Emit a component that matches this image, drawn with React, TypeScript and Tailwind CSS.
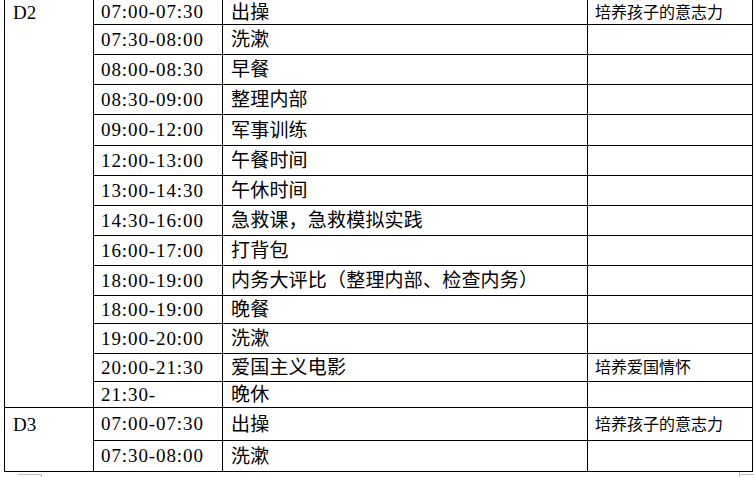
import React from "react"

type Row = { time: string; item: string; goal?: string; h: string }

const days: { day: string; rows: Row[] }[] = [
  {
    day: "D2",
    rows: [
      { time: "07:00-07:30", item: "出操", goal: "培养孩子的意志力", h: "h-[24px]" },
      { time: "07:30-08:00", item: "洗漱", h: "h-[30px]" },
      { time: "08:00-08:30", item: "早餐", h: "h-[30px]" },
      { time: "08:30-09:00", item: "整理内部", h: "h-[30px]" },
      { time: "09:00-12:00", item: "军事训练", h: "h-[31px]" },
      { time: "12:00-13:00", item: "午餐时间", h: "h-[30px]" },
      { time: "13:00-14:30", item: "午休时间", h: "h-[30px]" },
      { time: "14:30-16:00", item: "急救课，急救模拟实践", h: "h-[30px]" },
      { time: "16:00-17:00", item: "打背包", h: "h-[30px]" },
      { time: "18:00-19:00", item: "内务大评比（整理内部、检查内务）", h: "h-[30px]" },
      { time: "18:00-19:00", item: "晚餐", h: "h-[28px]" },
      { time: "19:00-20:00", item: "洗漱", h: "h-[30px]" },
      { time: "20:00-21:30", item: "爱国主义电影", goal: "培养爱国情怀", h: "h-[28px]" },
      { time: "21:30-", item: "晚休", h: "h-[26px]" },
    ],
  },
  {
    day: "D3",
    rows: [
      { time: "07:00-07:30", item: "出操", goal: "培养孩子的意志力", h: "h-[33px]" },
      { time: "07:30-08:00", item: "洗漱", h: "h-[31px]" },
    ],
  },
]

const serif = "font-['Liberation_Serif','Times_New_Roman',serif]"
const cjk = "font-['Noto_Sans_CJK_SC','Noto_Sans',sans-serif]"

export default function App() {
  return (
    <div className="relative h-[477px] w-[754px] overflow-hidden bg-white text-black">
      <table className="ml-[4px] w-[748px] table-fixed border-collapse">
        <colgroup>
          <col className="w-[89px]" />
          <col className="w-[129px]" />
          <col className="w-[365px]" />
          <col className="w-[165px]" />
        </colgroup>
        <tbody>
          {days.map((d, di) =>
            d.rows.map((r, i) => {
              const top = di === 0 && i === 0 ? "border-t-0" : ""
              return (
                <tr key={d.day + i}>
                  {i === 0 && (
                    <td
                      rowSpan={d.rows.length}
                      className={`border border-black p-0 align-top ${top}`}
                    >
                      <div className={`flex items-center pl-[8px] text-[19px] leading-none ${serif} ${r.h}`}>
                        {d.day}
                      </div>
                    </td>
                  )}
                  <td
                    className={`border border-black p-0 pl-[7px] text-[19px] leading-none tracking-[0.9px] ${serif} ${r.h} ${top}`}
                  >
                    {r.time}
                  </td>
                  <td
                    className={`border border-black p-0 pb-[3px] pl-[8px] text-[19px] leading-none tracking-[0.2px] ${cjk} ${top}`}
                  >
                    {r.item}
                  </td>
                  <td
                    className={`border border-black p-0 pb-[2px] pl-[7px] text-[16px] leading-none ${cjk} ${top}`}
                  >
                    {r.goal}
                  </td>
                </tr>
              )
            })
          )}
        </tbody>
      </table>

      {/* page corner marks */}
      <div className="absolute left-[18px] top-[474px] h-[3px] w-[24px] border-r border-t border-[#bfbfbf]" />
      <div className="absolute left-[739px] top-[472px] h-[5px] w-[15px] border-l border-[#bfbfbf]">
        <div className="mt-[2px] border-t border-[#bfbfbf]" />
      </div>
    </div>
  )
}
